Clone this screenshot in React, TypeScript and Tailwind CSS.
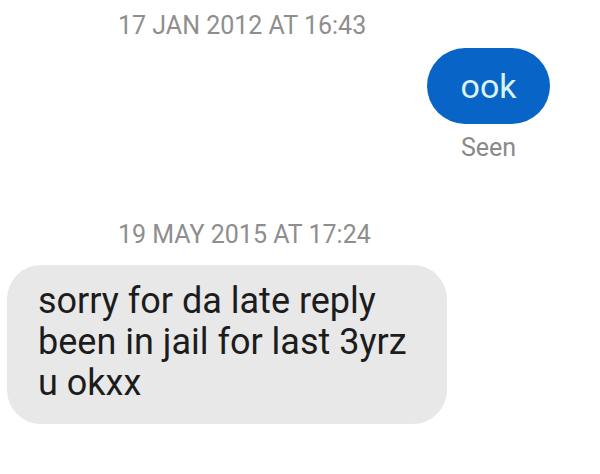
export default function App() {
  return (
    <div className="w-[600px] h-[474px] bg-white font-['Roboto',sans-serif] flex flex-col overflow-hidden">
      <div className="pt-[12px] pl-[118px] text-[25px] leading-[28px] text-[#8e8e8e]">
        17 JAN 2012 AT 16:43
      </div>
      <div className="self-end mr-[50px] mt-[8px] flex flex-col items-center">
        <div className="w-[123px] h-[76px] rounded-full bg-[#0865c7] flex items-center justify-center text-[34px] text-[#d9f3f2]">
          ook
        </div>
        <div className="mt-[10px] text-[25px] leading-[28px] text-[#8a8a8a]">Seen</div>
      </div>
      <div className="mt-[59px] pl-[118px] text-[25px] leading-[28px] text-[#8e8e8e]">
        19 MAY 2015 AT 17:24
      </div>
      <div className="mt-[16px] ml-[7px] w-[440px] h-[159px] rounded-[34px] bg-[#e8e8e8] pl-[31px] pt-[16px] text-[36px] leading-[41px] text-[#1c1c1c]">
        <p>sorry for da late reply</p>
        <p>been in jail for last 3yrz</p>
        <p>u okxx</p>
      </div>
    </div>
  )
}
